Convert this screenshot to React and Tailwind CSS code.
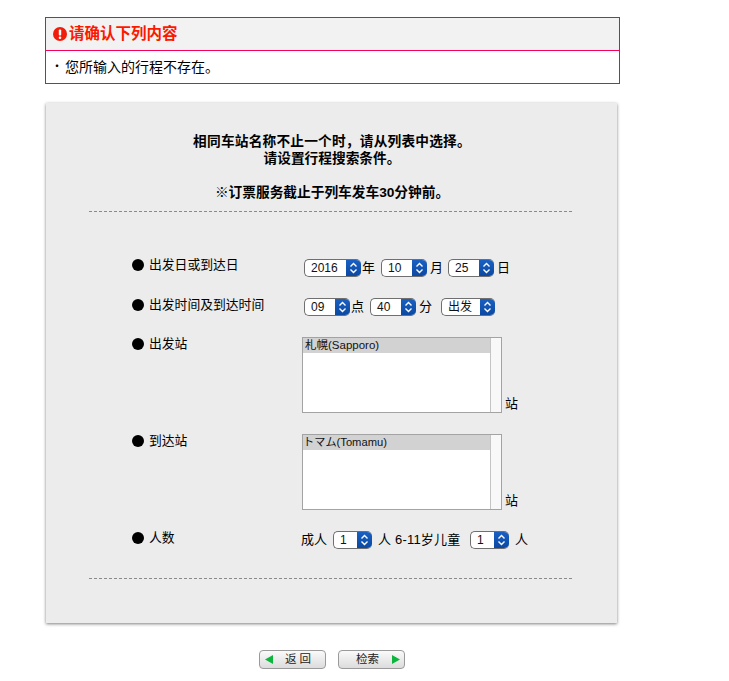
import React from "react";

const FONT = "font-['Liberation_Sans','Noto_Sans_CJK_SC',sans-serif]";

function Sel({ value, w }) {
  return (
    <div className={`flex h-[18px] ${w} shrink-0 overflow-hidden rounded-[5px] border border-r-0 border-[#6f6f6f] bg-white`}>
      <div className="flex-1 pl-[6px] text-[12px] leading-[17px] text-[#111]">{value}</div>
      <div className="-my-px flex w-[15px] items-center justify-center bg-gradient-to-b from-[#1a62c4] to-[#0a47a0]">
        <svg width="9" height="12" viewBox="0 0 9 12" fill="none" stroke="#fff" strokeWidth="1.4">
          <path d="M1.5 4.5 L4.5 1.5 L7.5 4.5" />
          <path d="M1.5 7.5 L4.5 10.5 L7.5 7.5" />
        </svg>
      </div>
    </div>
  );
}

function Label({ children }) {
  return (
    <div className="flex items-center gap-[5px] text-[12.8px] leading-[16px] text-black">
      <span className="h-3 w-3 shrink-0 rounded-full bg-black" />
      <span>{children}</span>
    </div>
  );
}

function ListBox({ value, textClass }) {
  return (
    <div className="flex items-end">
      <div className="flex h-[76px] w-[200px] border border-[#a3a3a3] bg-white">
        <div className="flex-1">
          <div className={`h-[15px] bg-[#d2d2d2] leading-[15px] text-[#111] ${textClass}`}>{value}</div>
        </div>
        <div className="w-[11px] border-l border-[#c4c4c4] bg-[#f8f8f8]" />
      </div>
      <span className="mb-px ml-[3px] text-[13px] leading-[16px]">站</span>
    </div>
  );
}

function Row({ label, labelTop, h, mb, children }) {
  return (
    <div className={`flex ${h} ${mb}`}>
      <div className={`w-[170px] ${labelTop}`}><Label>{label}</Label></div>
      <div className="flex-1">{children}</div>
    </div>
  );
}

function Btn({ left, text }) {
  return (
    <div className="relative flex h-[19px] w-[67px] items-center justify-center rounded-[4px] border border-[#9a9a9a] bg-gradient-to-b from-[#fafafa] to-[#dcdcdc] text-[11.5px] text-[#222]">
      {left && (
        <svg className="absolute left-[5px] top-[4px]" width="8" height="9" viewBox="0 0 8 9"><path d="M0 4.5 L8 0 V9 Z" fill="#0cb53c" /></svg>
      )}
      <span className={left ? "pl-[11px]" : "pr-[8px]"}>{text}</span>
      {!left && (
        <svg className="absolute right-[4px] top-[4px]" width="8" height="9" viewBox="0 0 8 9"><path d="M8 4.5 L0 0 V9 Z" fill="#0cb53c" /></svg>
      )}
    </div>
  );
}

export default function App() {
  return (
    <div className={`${FONT} h-[681px] w-[729px] overflow-hidden bg-white pl-[45px] pt-[17px] text-black`}>
      <div className="w-[575px] border border-[#f5005a]">
        <div className="flex h-[33px] items-center gap-[2px] border-b border-[#f5005a] bg-[#f2f2f2] pl-[7px]">
          <svg width="14" height="14" viewBox="0 0 14 14">
            <circle cx="7" cy="7" r="7" fill="#f01d0a" />
            <rect x="5.8" y="2.5" width="2.4" height="6" rx="1" fill="#fff" />
            <circle cx="7" cy="10.7" r="1.3" fill="#fff" />
          </svg>
          <span className="text-[15.5px] font-bold text-[#fb1a00]">请确认下列内容</span>
        </div>
        <div className="flex h-[32px] items-center pl-[5px]">
          <span className="w-[14px] text-[12px]">・</span>
          <span className="text-[14px]">您所输入的行程不存在。</span>
        </div>
      </div>

      <div className="ml-px mt-[19px] h-[520px] w-[571px] bg-[#ececec] pl-[43px] pr-[45px] pt-[30px] shadow-[0_1px_3px_0_rgba(0,0,0,0.5)]">
        <div className="pl-[3px] text-center text-[13.7px] font-bold leading-[17px]">
          <div className="tracking-[0.2px]">相同车站名称不止一个时，请从列表中选择。</div>
          <div>请设置行程搜索条件。</div>
          <div className="mt-[17px]">※订票服务截止于列车发车30分钟前。</div>
        </div>
        <div className="mt-[10px] border-t border-dashed border-[#8a8a8a]" />

        <div className="mt-[47px] pl-[43px]">
          <Row label="出发日或到达日" labelTop="-mt-[2px]" h="h-[18px]" mb="mb-[21px]">
            <div className="flex items-center pl-[2px] text-[13px]">
              <Sel value="2016" w="w-[57px]" />
              <span className="-mt-px ml-[1px] w-[19px]">年</span>
              <Sel value="10" w="w-[46px]" />
              <span className="-mt-px ml-[3px] w-[18px]">月</span>
              <Sel value="25" w="w-[46px]" />
              <span className="-mt-px ml-[3px]">日</span>
            </div>
          </Row>
          <Row label="出发时间及到达时间" labelTop="-mt-px" h="h-[18px]" mb="mb-[21px]">
            <div className="flex items-center pl-[2px] text-[13px]">
              <Sel value="09" w="w-[46px]" />
              <span className="-mt-px ml-[1px] w-[19px]">点</span>
              <Sel value="40" w="w-[46px]" />
              <span className="-mt-px ml-[3px] w-[22px]">分</span>
              <Sel value="出发" w="w-[54px]" />
            </div>
          </Row>
          <Row label="出发站" labelTop="-mt-px" h="h-[76px]" mb="mb-[21px]">
            <ListBox value="札幌(Sapporo)" textClass="pl-[2px] text-[11.5px]" />
          </Row>
          <Row label="到达站" labelTop="-mt-px" h="h-[76px]" mb="mb-[20px]">
            <ListBox value="トマム(Tomamu)" textClass="pl-0 text-[11.2px]" />
          </Row>
          <Row label="人数" labelTop="mt-0" h="h-[18px]" mb="mb-0">
            <div className="-ml-px flex items-center text-[13px]">
              <span className="w-[32px]">成人</span>
              <Sel value="1" w="w-[39px]" />
              <span className="ml-[6px] w-[92px] tracking-[0.2px]">人 6-11岁儿童</span>
              <Sel value="1" w="w-[39px]" />
              <span className="ml-[6px]">人</span>
            </div>
          </Row>
        </div>

        <div className="mt-[30px] border-t border-dashed border-[#8a8a8a]" />
      </div>

      <div className="ml-[214px] mt-[27px] flex gap-[12px]">
        <Btn left text="返 回" />
        <Btn text="检索" />
      </div>
    </div>
  );
}
